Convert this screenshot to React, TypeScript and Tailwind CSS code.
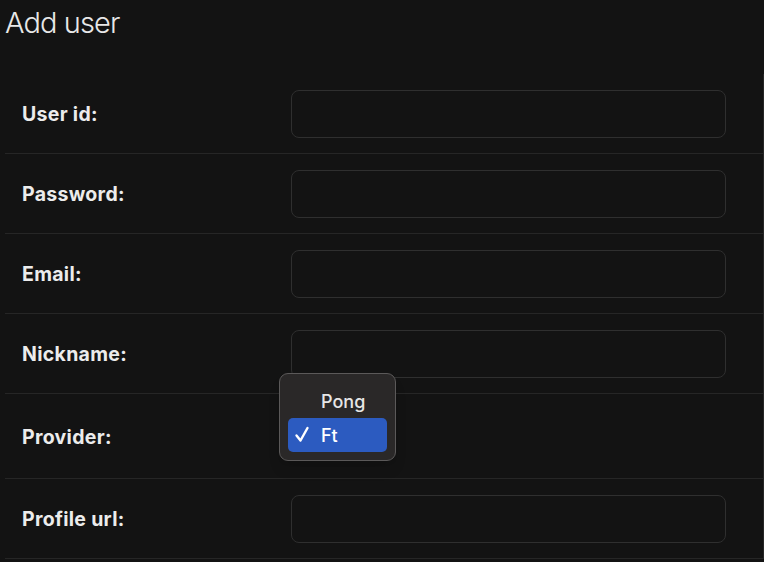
import React from 'react';

const fields = ['User id:', 'Password:', 'Email:', 'Nickname:'];

const Row = ({ label, tall, children }: { label: string; tall?: boolean; children: React.ReactNode }) => (
    <div className={`flex items-center border-b border-[#262626] ${tall ? 'h-[85px]' : 'h-20'}`}>
        <div className="w-[286px] pl-[17px] pt-[3px] text-[19.5px] font-bold tracking-[0.3px] text-[#ececec]">{label}</div>
        {children}
    </div>
);

const TextInput = () => (
    <input className="w-[435px] h-12 rounded-lg border border-[#2f2f2f] bg-[#131313] outline-none" />
);

const App = () => {
    return (
        <div className="relative min-h-[562px] bg-[#131313] px-[5px] font-['Inter','Liberation_Sans',sans-serif] overflow-hidden">
            {/* Title */}
            <h1 className="pt-[3px] text-[29px] font-light tracking-[-0.9px] text-[#e8e8e8] leading-[40px] mb-[31px]">Add user</h1>

            {/* Form rows */}
            <div className="border-r border-[#262626] -mr-[5px]">
                {fields.map((f) => (
                    <Row key={f} label={f}>
                        <TextInput />
                    </Row>
                ))}

                <Row label="Provider:" tall>
                    <div className="relative w-[435px] h-6">
                        {/* Native select popup */}
                        <div className="absolute left-[-12px] top-[-51px] w-[117px] h-[88px] rounded-[9px] border border-[#5b5959] bg-[#2a2828] px-[8px] pt-[10px] shadow-lg">
                            <div className="flex h-[34px] items-center pl-[33px] text-[18px] font-medium text-[#e6e6e6]">Pong</div>
                            <div className="flex h-[34px] items-center rounded-[5px] bg-[#2c5bc0] text-[18px] font-medium text-white">
                                <svg width="33" height="20" viewBox="0 0 33 20" className="shrink-0">
                                    <path d="M8.5 10.5 L12.5 15.5 L19.5 3" fill="none" stroke="#ffffff" strokeWidth="2.4" strokeLinecap="round" strokeLinejoin="round" />
                                </svg>
                                <span>Ft</span>
                            </div>
                        </div>
                    </div>
                </Row>

                <Row label="Profile url:">
                    <TextInput />
                </Row>
            </div>
        </div>
    );
};

export default App;
